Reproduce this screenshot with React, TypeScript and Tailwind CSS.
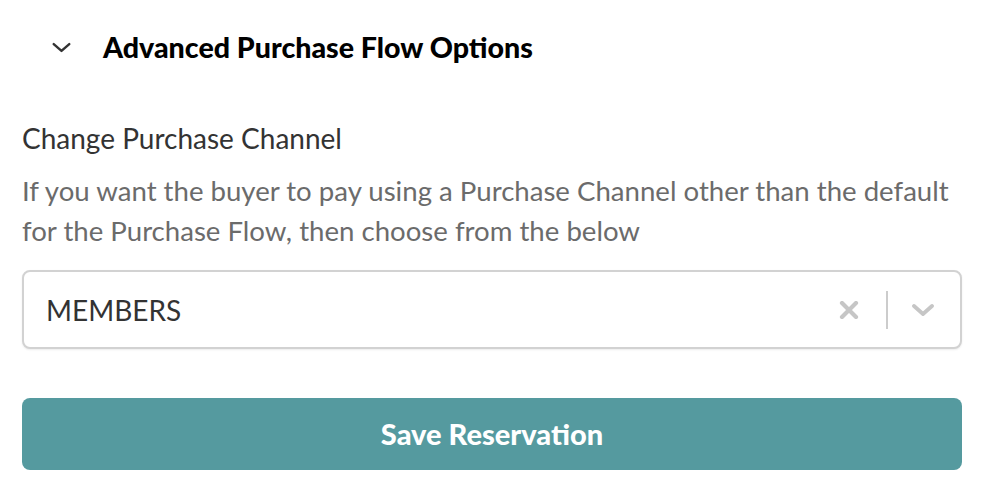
const ChevronIcon = ({ className }: { className?: string }) => (
  <svg viewBox="0 0 22 12" className={className} fill="none" stroke="currentColor" strokeLinecap="round" strokeLinejoin="round">
    <path d="M2 2 L11 10 L20 2" />
  </svg>
);

const App = () => {
  return (
    <div
      className="w-[994px] h-[492px] bg-white px-[22px] pt-[24px]"
      style={{ fontFamily: "Lato, 'Noto Sans', sans-serif" }}
    >
      {/* Section header */}
      <div className="flex items-center h-[46px]">
        <div className="w-[81px] pl-[30px] flex items-center">
          <ChevronIcon className="w-[19px] h-[11px] text-[#333] [stroke-width:2.8]" />
        </div>
        <h2 className="text-[28.6px] font-black text-black">
          Advanced Purchase Flow Options
        </h2>
      </div>

      {/* Purchase channel */}
      <div className="mt-[48px]">
        <label className="block text-[28px] leading-[40px] text-[#333]">
          Change Purchase Channel
        </label>
        <p className="mt-[13px] text-[27.6px] leading-[40px] text-[#6b6b6b]">
          If you want the buyer to pay using a Purchase Channel other than the default
          for the Purchase Flow, then choose from the below
        </p>

        <div className="mt-[19px] w-[940px] h-[79px] flex items-center border-2 border-[#d2d2d2] rounded-[8px] shadow-[0_1px_2px_rgba(0,0,0,0.08)] bg-white">
          <span className="flex-1 pl-[22px] text-[28px] text-[#333]">MEMBERS</span>
          <div className="flex items-center pr-[26px]">
            <svg viewBox="0 0 20 18" className="w-[20px] h-[18px] text-[#c6c6c6]" fill="none" stroke="currentColor" strokeWidth={4.2} strokeLinecap="round">
              <path d="M3 2 L17 16 M17 2 L3 16" />
            </svg>
            <div className="ml-[27px] mr-[24px] w-[2px] h-[38px] bg-[#cccccc]" />
            <ChevronIcon className="w-[22px] h-[12px] text-[#c6c6c6] [stroke-width:3.8]" />
          </div>
        </div>
      </div>

      <button
        type="button"
        className="mt-[49px] w-[940px] h-[72px] rounded-[8px] bg-[#559a9f] text-white text-[29px] font-black"
      >
        Save Reservation
      </button>
    </div>
  );
};

export default App;
